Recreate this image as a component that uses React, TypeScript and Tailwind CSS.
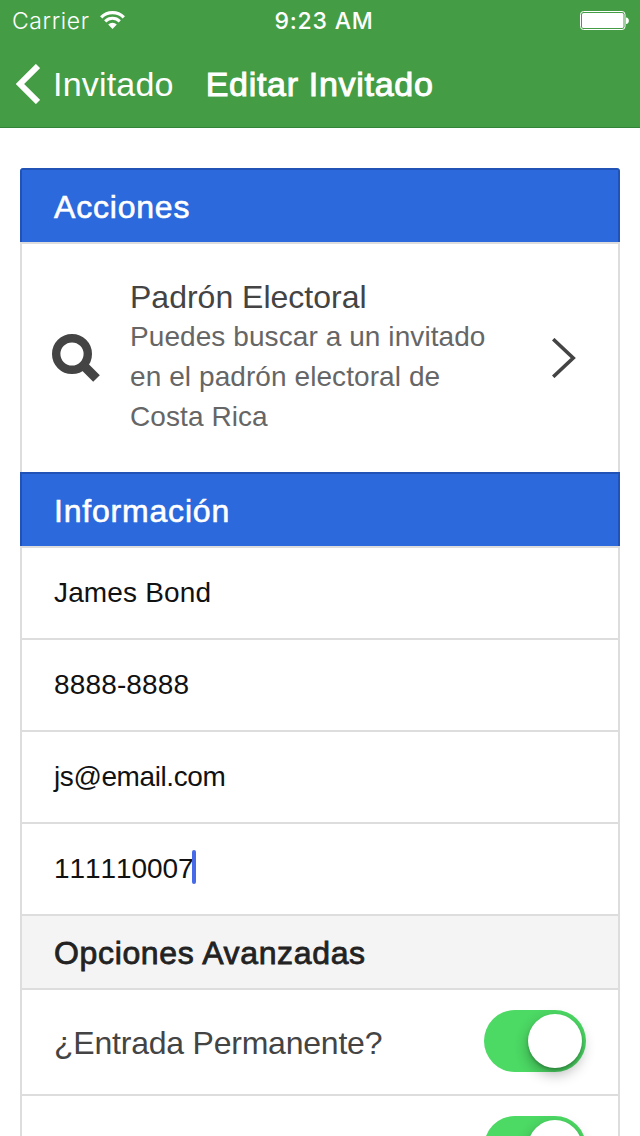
import { ReactNode } from "react";

function StatusBar() {
    return (
        <div className="grid h-10 grid-cols-3 items-center pr-2.5 pl-3 font-[Inter,sans-serif] text-[23px] leading-[42px]">
            <div className="flex items-center gap-2.5">
                <span className="font-[350] tracking-[0.6px]">Carrier</span>
                <svg className="-mt-0.5 h-[18px] w-[25px]" viewBox="0 0 25 18" fill="none" stroke="currentColor">
                    <path d="M1.2 6.3a16 16 0 0 1 22.6 0" strokeWidth="3.2" />
                    <path d="M5.2 10.4a10.3 10.3 0 0 1 14.6 0" strokeWidth="3" />
                    <path d="M12.5 18 8.2 13.6a6.1 6.1 0 0 1 8.6 0z" fill="currentColor" stroke="none" />
                </svg>
            </div>
            <span className="pl-1.5 text-center font-medium tracking-[0.8px] whitespace-nowrap">9:23 AM</span>
            <svg className="-mt-0.5 h-5 w-[50px] justify-self-end" viewBox="0 0 50 20">
                <rect x="0.5" y="1.5" width="44.5" height="18" rx="3" fill="none" stroke="currentColor" />
                <rect x="2" y="3" width="41.5" height="15" rx="1.5" fill="currentColor" />
                <path d="M46 7.5c3.8 0 3.8 6.5 0 6.5z" fill="currentColor" />
            </svg>
        </div>
    );
}

function NavBar() {
    return (
        <header className="h-32 border-b border-[#338437] bg-[#449d44] text-white">
            <StatusBar />
            <div className="flex h-[88px] items-center pl-4 text-[34px] leading-[88px]">
                <svg className="h-10 w-6" viewBox="0 0 24 40" fill="none" stroke="currentColor" strokeWidth="6">
                    <path d="M22 2 4 20l18 18" />
                </svg>
                <span className="ml-[13px] tracking-[0.2px]">Invitado</span>
                <h1 className="ml-8 font-normal tracking-[0.7px] [-webkit-text-stroke:1px_currentColor]">Editar Invitado</h1>
            </div>
        </header>
    );
}

function Divider({ children }: { children: ReactNode }) {
    return (
        <h2 className="h-[74px] border-2 border-b-0 border-[#2053b5] bg-[#2b69dc] px-8 text-[32px] leading-[74px] tracking-[0.8px] text-white [-webkit-text-stroke:0.6px_currentColor]">
            {children}
        </h2>
    );
}

function Field({ value, spacing = "tracking-[0.15px]", active }: { value: string; spacing?: string; active?: boolean }) {
    return (
        <div className="flex h-[92px] items-center border-2 border-b-0 border-[#ddd] px-8 text-[28px] leading-[90px] text-[#111] [font-kerning:none]">
            <span className={spacing}>{value}</span>
            {active && <span className="-mt-1 -ml-px h-[34px] w-1 rounded-xs bg-[#476ae8]" />}
        </div>
    );
}

function Toggle() {
    return (
        <div className="flex h-[62px] w-[102px] justify-end rounded-full bg-[#4cd964] p-1">
            <div className="size-[54px] rounded-full bg-white shadow-[0_6px_14px_rgba(0,0,0,0.3),0_2px_3px_rgba(0,0,0,0.2)]" />
        </div>
    );
}

function ToggleRow({ label }: { label: string }) {
    return (
        <div className="flex h-[106px] items-start justify-between border-2 border-b-0 border-[#ddd] pt-5 pr-8 pl-8 text-[32px] leading-[66px] tracking-[-0.22px] text-[#444]">
            <span>{label}</span>
            <Toggle />
        </div>
    );
}

export default function App() {
    return (
        <div className="h-[1136px] overflow-hidden bg-white font-['Liberation_Sans',Arial,sans-serif]">
            <NavBar />
            <main className="px-5 pt-10">
                <div className="overflow-hidden rounded-t">
                    <Divider>Acciones</Divider>
                    <div className="flex h-[230px] items-center border-2 border-b-0 border-[#ddd] pl-[30px]">
                        <svg className="h-12 w-12 shrink-0" viewBox="0 0 48 48" fill="none" stroke="#444">
                            <circle cx="20" cy="20" r="15.8" strokeWidth="8.4" />
                            <path d="m30.5 30.5 14 14" strokeWidth="9.4" />
                        </svg>
                        <div className="ml-[30px] w-[380px] pb-0.5 text-[28px] leading-10 text-[#666]">
                            <h3 className="text-[32px] leading-10 text-[#444]">Padrón Electoral</h3>
                            <p className="tracking-[0.08px]">Puedes buscar a un invitado en el padrón electoral de Costa Rica</p>
                        </div>
                        <svg className="ml-[42px] h-10 w-6" viewBox="0 0 24 40" fill="none" stroke="#444" strokeWidth="3.6">
                            <path d="m1.2 1.2 20 18.8-20 18.8" />
                        </svg>
                    </div>
                    <Divider>Información</Divider>
                    <Field value="James Bond" />
                    <Field value="8888-8888" />
                    <Field value="js@email.com" spacing="tracking-[-0.4px]" />
                    <Field value="111110007" spacing="tracking-[-0.08px]" active />
                    <h2 className="h-[74px] border-2 border-b-0 border-[#ddd] bg-[#f4f4f4] px-8 text-[32px] leading-[74px] tracking-[0.65px] text-[#222] [-webkit-text-stroke:0.8px_currentColor]">
                        Opciones Avanzadas
                    </h2>
                    <ToggleRow label="¿Entrada Permanente?" />
                    <ToggleRow label="" />
                </div>
            </main>
        </div>
    );
}
